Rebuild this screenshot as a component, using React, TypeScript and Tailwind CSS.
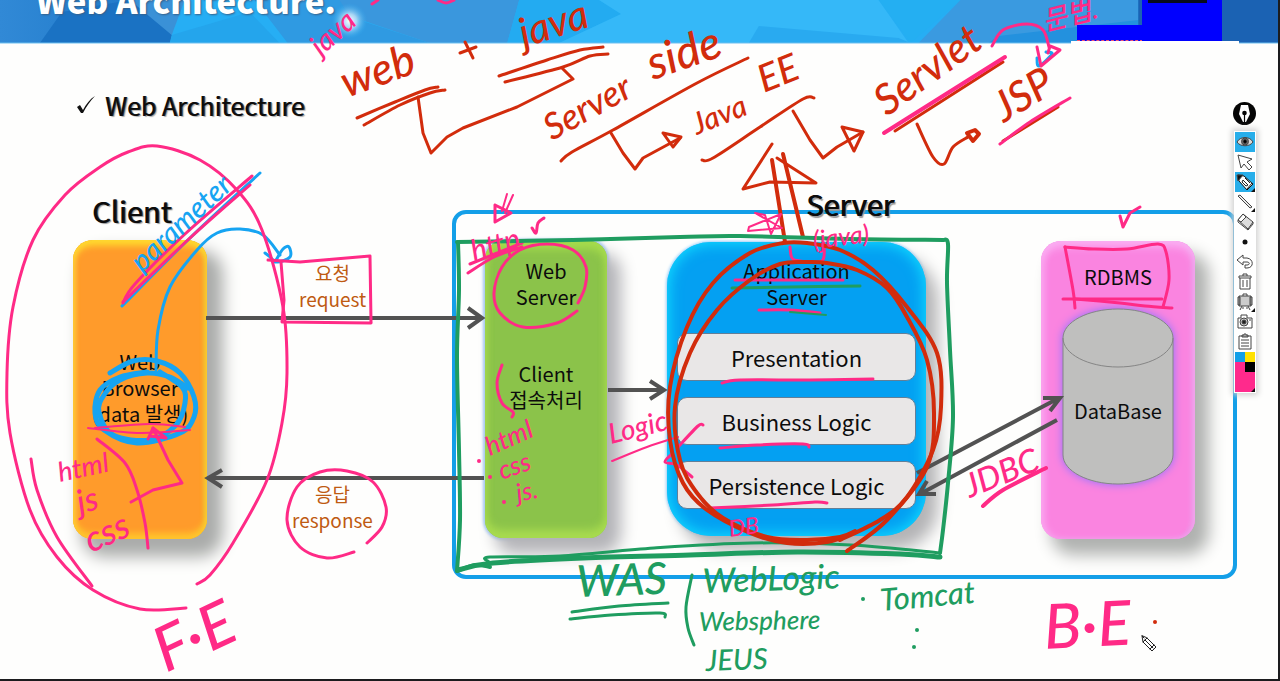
import React from "react";

type Point = [number, number];

const PINK = "#ff2a86";
const RED = "#d22c0c";
const GREEN = "#1f9d60";
const BLUE = "#16a4f2";

interface Stroke {
  color: string;
  width: number;
  points: Point[];
  sharp?: boolean;
}

interface Note {
  text: string;
  x: number;
  y: number;
  size: number;
  angle: number;
  color: string;
}

// Catmull-Rom smoothing, so that a pen line runs through each recorded point.
function toPath(points: Point[], sharp?: boolean): string {
  if (sharp || points.length < 3) {
    return "M" + points.map((p) => p.join(" ")).join(" L");
  }
  let d = `M${points[0][0]} ${points[0][1]}`;
  for (let i = 0; i < points.length - 1; i++) {
    const a = points[i - 1] ?? points[i];
    const b = points[i];
    const c = points[i + 1];
    const e = points[i + 2] ?? c;
    d += ` C${b[0] + (c[0] - a[0]) / 6} ${b[1] + (c[1] - a[1]) / 6} ${c[0] - (e[0] - b[0]) / 6} ${c[1] - (e[1] - b[1]) / 6} ${c[0]} ${c[1]}`;
  }
  return d;
}

const strokes: Stroke[] = [
  // browser rings and request path
  { color: BLUE, width: 3, points: [[156, 370], [158, 330], [170, 287], [197, 250], [217, 233], [240, 229], [263, 235], [280, 255]] },
  { color: BLUE, width: 3, points: [[265, 253], [269, 256], [277, 262], [290, 257], [289, 247], [283, 249], [275, 262]] },
  { color: BLUE, width: 5, points: [[110, 373], [133, 361], [157, 361], [180, 373], [194, 397], [194, 417], [180, 433], [137, 443], [104, 430], [95, 413], [100, 390], [120, 377], [147, 372]] },
  { color: BLUE, width: 5, points: [[188, 388], [170, 377], [147, 373], [120, 380], [104, 395], [99, 412], [113, 435], [150, 440], [176, 425], [185, 403], [182, 387], [160, 372]] },
  { color: BLUE, width: 3, points: [[260, 173], [190, 238], [122, 306]] },
  { color: PINK, width: 3, points: [[252, 176], [185, 234], [135, 284], [123, 303]] },
  { color: PINK, width: 3, points: [[250, 185], [190, 238], [123, 302]] },
  // client ring
  { color: PINK, width: 3, points: [[186, 608], [140, 609], [93, 590], [57, 557], [30, 510], [10, 433], [7, 373], [13, 307], [33, 240], [65, 195], [100, 167], [128, 152], [157, 146], [200, 160], [237, 190], [262, 230], [283, 307], [287, 373], [282, 423], [267, 480], [233, 543], [210, 575], [197, 584]] },
  { color: PINK, width: 3, points: [[31, 459], [37, 490], [57, 537], [92, 586]] },
  { color: PINK, width: 2, points: [[88, 428], [140, 433], [190, 430]] },
  { color: PINK, width: 2, points: [[95, 428], [150, 424], [185, 427]] },
  { color: PINK, width: 3, points: [[97, 439], [125, 463], [137, 490], [145, 523], [148, 548]] },
  { color: PINK, width: 3, points: [[131, 502], [153, 490], [182, 483], [168, 460], [153, 428]], sharp: true },
  { color: PINK, width: 3, points: [[148, 439], [153, 428], [166, 438], [150, 436]], sharp: true },
  // request and response marks
  { color: PINK, width: 3, points: [[268, 260], [300, 262], [370, 256], [371, 322]], sharp: true },
  { color: PINK, width: 3, points: [[281, 262], [284, 300], [282, 322], [371, 323]], sharp: true },
  { color: PINK, width: 3, points: [[354, 552], [327, 558], [300, 547], [287, 520], [297, 487], [320, 472], [347, 471], [373, 482], [386, 507], [382, 527], [367, 543]] },
  // header scraps
  { color: PINK, width: 3, points: [[372, 4], [378, 0]] },
  { color: PINK, width: 3, points: [[438, 0], [446, 3], [454, 0]] },
  // web + java
  { color: RED, width: 3, points: [[357, 118], [395, 102], [425, 90], [438, 87]] },
  { color: RED, width: 3, points: [[364, 125], [400, 105], [430, 93], [445, 90]] },
  { color: RED, width: 3, points: [[460, 53], [476, 47]] },
  { color: RED, width: 3, points: [[465, 42], [473, 58]] },
  { color: RED, width: 3, points: [[499, 76], [547, 60], [580, 50], [603, 47]] },
  { color: RED, width: 3, points: [[505, 82], [563, 67], [590, 56], [608, 54]] },
  { color: RED, width: 3, points: [[418, 97], [423, 133], [431, 153], [447, 137], [463, 128], [517, 107], [573, 79], [562, 68]], sharp: true },
  // server side
  { color: RED, width: 3, points: [[561, 161], [572, 152], [613, 130], [697, 83], [748, 58]] },
  { color: RED, width: 3, points: [[611, 133], [623, 153], [635, 169], [643, 158], [680, 138]], sharp: true },
  { color: RED, width: 3, points: [[663, 133], [681, 137], [673, 147], [663, 133]], sharp: true },
  // java ee
  { color: RED, width: 3, points: [[702, 160], [713, 158], [760, 127], [803, 99], [814, 98]] },
  { color: RED, width: 3, points: [[793, 111], [810, 140], [823, 158], [837, 147], [863, 132]], sharp: true },
  { color: RED, width: 3, points: [[842, 127], [863, 132], [854, 151], [842, 127]], sharp: true },
  // servlet
  { color: RED, width: 3, points: [[895, 131], [1003, 62]] },
  { color: PINK, width: 4, points: [[884, 133], [1005, 57]] },
  { color: RED, width: 3, points: [[917, 124], [933, 157], [944, 164], [953, 147], [968, 137]] },
  { color: RED, width: 4, points: [[967, 133], [975, 130], [979, 134], [973, 141], [967, 133]], sharp: true },
  { color: RED, width: 3, points: [[1003, 141], [1058, 107]] },
  { color: PINK, width: 3, points: [[1000, 144], [1030, 122], [1070, 98]] },
  { color: BLUE, width: 3, points: [[1037, 58], [1039, 66], [1052, 54], [1046, 52]] },
  { color: PINK, width: 3, points: [[992, 46], [1003, 30], [1027, 24], [1043, 30], [1049, 47]] },
  { color: PINK, width: 3, points: [[1037, 47], [1041, 66], [1060, 50], [1050, 46], [1048, 53]], sharp: true },
  // application server double arrow
  { color: RED, width: 3, points: [[772, 144], [743, 189], [770, 182], [816, 183], [777, 158]], sharp: true },
  { color: RED, width: 4, points: [[772, 160], [785, 242]] },
  { color: RED, width: 4, points: [[783, 154], [803, 237]] },
  // stars and ticks
  { color: PINK, width: 2, points: [[755, 213], [782, 228], [748, 231], [749, 227], [781, 214], [771, 234], [765, 215], [755, 213]], sharp: true },
  { color: PINK, width: 3, points: [[495, 205], [511, 213], [495, 222], [495, 205]], sharp: true },
  { color: PINK, width: 2, points: [[507, 194], [502, 211]] },
  { color: PINK, width: 2, points: [[513, 195], [505, 213]] },
  { color: PINK, width: 3, points: [[532, 228], [536, 233], [538, 223], [544, 218]] },
  { color: PINK, width: 3, points: [[1120, 216], [1123, 227], [1130, 213], [1140, 207]], sharp: true },
  { color: PINK, width: 3, points: [[470, 264], [522, 243]] },
  { color: PINK, width: 3, points: [[468, 273], [494, 257], [522, 247]] },
  // web server
  { color: PINK, width: 3, points: [[577, 311], [557, 323], [523, 327], [500, 313], [494, 293], [502, 267], [520, 250], [547, 244], [573, 250], [586, 267], [585, 287], [578, 303]] },
  { color: PINK, width: 3, points: [[502, 365], [497, 383], [502, 403], [513, 412], [512, 417]] },
  { color: PINK, width: 2, points: [[612, 461], [647, 447], [678, 437]] },
  { color: PINK, width: 3, points: [[703, 425], [698, 426], [678, 447]] },
  { color: PINK, width: 3, points: [[692, 477], [677, 465], [665, 462], [672, 454]] },
  // green frame
  { color: GREEN, width: 4, points: [[458, 242], [459, 290], [457, 357], [459, 450], [460, 520], [457, 571]] },
  { color: GREEN, width: 4, points: [[457, 571], [475, 565], [490, 567]] },
  { color: GREEN, width: 4, points: [[457, 242], [573, 240], [680, 237], [740, 236], [850, 239], [943, 240]] },
  { color: GREEN, width: 4, points: [[943, 240], [948, 244], [947, 283], [950, 350], [953, 417], [948, 483], [943, 530], [940, 553]] },
  { color: GREEN, width: 3, points: [[940, 553], [851, 545], [751, 543], [654, 548], [560, 556], [490, 557], [489, 562]] },
  { color: GREEN, width: 5, points: [[458, 570], [493, 563], [583, 558], [690, 555], [797, 552], [900, 554], [940, 557]] },
  // application server marks
  { color: PINK, width: 3, points: [[790, 247], [792, 258], [800, 261], [822, 261], [824, 243]] },
  { color: PINK, width: 3, points: [[735, 280], [843, 280]] },
  { color: GREEN, width: 3, points: [[732, 288], [790, 287], [860, 286]] },
  { color: PINK, width: 3, points: [[759, 310], [790, 310], [820, 313]] },
  { color: GREEN, width: 2, points: [[790, 312], [826, 315]] },
  { color: PINK, width: 3, points: [[722, 383], [740, 380], [810, 380], [873, 379]] },
  { color: PINK, width: 3, points: [[720, 448], [757, 445], [803, 444], [809, 447]] },
  { color: PINK, width: 3, points: [[710, 508], [773, 505], [815, 502], [827, 503]] },
  { color: RED, width: 4, points: [[857, 532], [827, 542], [787, 543], [750, 533], [707, 510], [683, 483], [670, 440], [670, 387], [687, 327], [713, 283], [750, 253], [783, 243], [807, 243], [840, 250], [873, 270], [907, 307], [937, 353], [941, 407], [933, 450], [907, 497], [880, 520], [840, 540]] },
  { color: RED, width: 4, points: [[855, 531], [840, 537], [807, 540], [767, 537], [723, 518], [697, 493], [680, 460], [675, 407], [690, 353], [717, 310], [750, 280], [780, 264], [807, 262], [827, 263], [857, 270], [887, 288], [907, 317], [927, 360], [934, 413], [927, 467], [887, 520], [847, 551]] },
  // database
  { color: PINK, width: 3, points: [[1075, 308], [1073, 290], [1065, 247]] },
  { color: PINK, width: 3, points: [[1065, 247], [1093, 249], [1127, 249], [1158, 244], [1166, 252], [1169, 280], [1163, 307]] },
  { color: PINK, width: 3, points: [[1063, 299], [1162, 299]] },
  { color: PINK, width: 3, points: [[1075, 299], [1120, 303], [1145, 306], [1172, 308]] },
  { color: PINK, width: 4, points: [[983, 506], [1003, 490], [1046, 468]] },
  // product names
  { color: GREEN, width: 3, points: [[572, 612], [619, 606], [668, 603]] },
  { color: GREEN, width: 3, points: [[570, 619], [611, 615], [660, 613], [665, 617]] },
  { color: GREEN, width: 3, points: [[692, 575], [686, 607], [688, 628], [694, 645]] },
];

const dots: [number, number, string][] = [
  [479, 461, PINK], [490, 477, PINK], [504, 502, PINK],
  [863, 599, GREEN], [917, 630, GREEN], [914, 647, GREEN],
  [1155, 622, RED],
];

const notes: Note[] = [
  { text: "java", x: 321, y: 57, size: 29, angle: -42, color: PINK },
  { text: "문법.", x: 1045, y: 31, size: 27, angle: -14, color: PINK },
  { text: "web", x: 347, y: 98, size: 44, angle: -20, color: RED },
  { text: "java", x: 524, y: 48, size: 41, angle: -18, color: RED },
  { text: "Server", x: 552, y: 141, size: 36, angle: -29, color: RED },
  { text: "side", x: 653, y: 80, size: 46, angle: -19, color: RED },
  { text: "Java", x: 697, y: 135, size: 30, angle: -22, color: RED },
  { text: "EE", x: 764, y: 93, size: 38, angle: -22, color: RED },
  { text: "Servlet", x: 887, y: 117, size: 42, angle: -36, color: RED },
  { text: "JSP", x: 1004, y: 123, size: 42, angle: -31, color: RED },
  { text: "parameter", x: 142, y: 273, size: 29, angle: -43, color: BLUE },
  { text: "html", x: 60, y: 482, size: 27, angle: -12, color: PINK },
  { text: "js", x: 80, y: 514, size: 33, angle: -15, color: PINK },
  { text: "css", x: 91, y: 553, size: 36, angle: -24, color: PINK },
  { text: "F·E", x: 166, y: 673, size: 62, angle: -25, color: PINK },
  { text: "http", x: 474, y: 261, size: 29, angle: -16, color: PINK },
  { text: "html", x: 490, y: 456, size: 26, angle: -24, color: PINK },
  { text: "css", x: 502, y: 480, size: 26, angle: -20, color: PINK },
  { text: "js.", x: 518, y: 502, size: 25, angle: -12, color: PINK },
  { text: "Logic", x: 611, y: 444, size: 28, angle: -14, color: PINK },
  { text: "(java)", x: 814, y: 249, size: 25, angle: -7, color: PINK },
  { text: "DB", x: 730, y: 537, size: 23, angle: -8, color: PINK },
  { text: "JDBC", x: 970, y: 498, size: 33, angle: -22, color: PINK },
  { text: "B·E", x: 1045, y: 649, size: 62, angle: -3, color: PINK },
  { text: "WAS", x: 577, y: 597, size: 44, angle: -2, color: GREEN },
  { text: "WebLogic", x: 703, y: 593, size: 34, angle: -2, color: GREEN },
  { text: "Websphere", x: 699, y: 631, size: 26, angle: -1, color: GREEN },
  { text: "JEUS", x: 706, y: 671, size: 29, angle: -2, color: GREEN },
  { text: "Tomcat", x: 881, y: 611, size: 31, angle: -5, color: GREEN },
];

function Header() {
  return (
    <header className="relative h-11 overflow-hidden">
      <svg className="absolute inset-0 h-11 w-full" viewBox="0 0 1280 44" preserveAspectRatio="none" aria-hidden="true">
        <defs>
          <radialGradient id="spark">
            <stop offset="0" stopColor="#fff" />
            <stop offset="0.4" stopColor="#d5effd" stopOpacity="0.7" />
            <stop offset="1" stopColor="#26aef4" stopOpacity="0" />
          </radialGradient>
          <linearGradient id="leftBlue" x1="0" x2="1">
            <stop offset="0" stopColor="#3189d6" />
            <stop offset="1" stopColor="#1b76c6" />
          </linearGradient>
        </defs>
        <path d="M0 0H1280V43H0Z" fill="#26aef4" />
        <path d="M0 0H150L172 35L170 43H0Z" fill="url(#leftBlue)" />
        <path d="M62 12L130 0L172 35L170 43H40Z" fill="#1a72c3" />
        <path d="M130 0H185L172 35Z" fill="#3a91d7" />
        <path d="M172 35L250 12L280 43H170Z" fill="#24a5ec" />
        <path d="M255 0H340L366 22L430 43H288Z" fill="#2f9ae2" />
        <path d="M340 0H520L508 43H430L350 16Z" fill="#3a97dd" />
        <path d="M520 0H600L622 14L560 43H508Z" fill="#23abf1" />
        <path d="M600 0H880L910 43H560L622 14Z" fill="#35b8f8" />
        <path d="M760 26L900 38L912 43H750Z" fill="#29aaf0" />
        <path d="M880 0H962L912 43Z" fill="#24aff2" />
        <path d="M962 0H1140V43H920Z" fill="#3a9ae0" />
        <path d="M1000 36L1140 20V43H990Z" fill="#2391de" />
        <path d="M1140 0H1280V43H1140Z" fill="#1b62b3" />
        <path d="M0 43H1280" stroke="#6cc0f0" />
        <circle cx="350" cy="21" r="18" fill="url(#spark)" />
      </svg>
      <p className="relative -mt-6 pl-9 text-[33px] leading-[48px] font-extrabold whitespace-nowrap text-white [text-shadow:1px_1px_2px_#38618a]">
        Web Architecture.
      </p>
      <div className="absolute top-[25px] left-[1077px] h-4 w-[66px] border-b border-dashed border-[#ee5577] bg-[#0000ff]" />
      <div className="absolute top-0 left-[1142px] h-[41px] w-20 bg-[#0000ff]" />
      <div className="absolute top-0 left-[1148px] h-[3px] w-[59px] bg-[#070b1c]" />
      <div className="absolute top-[41px] left-[1071px] h-[3px] w-[168px] bg-white" />
    </header>
  );
}

function Connectors() {
  return (
    <svg className="pointer-events-none absolute top-0 left-0" width="1280" height="681" fill="none" stroke="#525252" strokeWidth="4" aria-hidden="true">
      <path d="M206 318H481M468 308L482 318L468 328" />
      <path d="M484 478H209M222 470L208 478L222 487" />
      <path d="M608 390H662M650 381L664 390L650 399" />
      <path d="M917 473L1059 398M1043 398H1060L1050 411" />
      <path d="M1057 420L920 494M936 494H919L927 481" />
    </svg>
  );
}

function Diagram() {
  return (
    <section aria-label="Web architecture diagram">
      <div className="absolute top-[210px] left-[452px] h-[369px] w-[785px] rounded-[14px] border-4 border-[#149fe8]" />

      <h2 className="absolute top-[192px] left-[92px] text-[29px] leading-9 [text-shadow:1px_0_0_#222,2px_1px_1px_#999]">Client</h2>
      <h2 className="absolute top-[185px] left-[806px] text-[29px] leading-9 [text-shadow:1px_0_0_#111,2px_2px_1px_#999]">Server</h2>

      <div className="absolute top-[240px] left-[73px] flex h-[299px] w-[134px] flex-col items-center justify-center rounded-[20px] bg-[#ff9b2b] pb-1 text-center text-[20px] leading-[26px] shadow-[12px_14px_16px_4px_#aaacaa,inset_0_6px_6px_#ffd72e,inset_0_-6px_6px_#ffc42c,inset_-3px_0_4px_#e9bd3a,inset_3px_0_4px_#ffb347]">
        <p>Web<br />Browser<br />(data 발생)</p>
      </div>

      <div className="absolute top-[241px] left-[485px] flex h-[297px] w-[122px] flex-col items-center rounded-[18px] bg-[#8bc34a] pt-[17px] text-center text-[20px] leading-[26px] shadow-[12px_14px_16px_2px_#b4b4b8,0_0_3px_2px_#a4c8f4,inset_0_8px_8px_#a6dc4c,inset_0_-8px_8px_#a9dc50]">
        <p>Web<br />Server</p>
        <p className="mt-[51px]">Client<br />접속처리</p>
      </div>

      <div className="absolute top-[242px] left-[667px] flex h-[294px] w-[259px] flex-col items-center rounded-[44px] bg-[#04a0f2] px-2.5 pt-4 text-center shadow-[12px_14px_16px_0px_#b4b4b6,0_0_3px_1px_#9bd0fa,inset_0_0_14px_2px_#10dcff]">
        <p className="text-[20px] leading-[26px]">Application<br />Server</p>
        <ul className="mt-[23px] flex w-full flex-col gap-4 text-[22px] leading-[46px]">
          <li className="h-12 rounded-[10px] border border-[#627f98] bg-[#e9e7e7]">Presentation</li>
          <li className="h-12 rounded-[10px] border border-[#627f98] bg-[#e9e7e7]">Business Logic</li>
          <li className="h-12 rounded-[10px] border border-[#627f98] bg-[#e9e7e7]">Persistence Logic</li>
        </ul>
      </div>

      <div className="absolute top-[241px] left-[1041px] flex h-[298px] w-[154px] flex-col items-center rounded-[20px] bg-[#fa84e0] pt-[22px] text-center text-[20px] leading-7 shadow-[12px_14px_16px_2px_#b0b2b0,inset_0_6px_8px_#fbaef2,inset_4px_0_6px_#fa9cec,inset_-3px_0_4px_#e59ce8]">
        <p>RDBMS</p>
        <div className="relative mt-[18px] flex h-[175px] w-[110px] items-center justify-center pt-7">
          <svg className="absolute top-0 left-0 overflow-visible drop-shadow-[0_0_4px_#8a74ff]" width="110" height="175" aria-hidden="true">
            <path d="M0 29C0 13 25 0 55 0S110 13 110 29V146C110 162 85 175 55 175S0 162 0 146Z" fill="#bfbfbe" stroke="#858585" />
            <path d="M0 29C0 45 25 58 55 58S110 45 110 29" fill="none" stroke="#858585" />
          </svg>
          <span className="relative">DataBase</span>
        </div>
      </div>

      <p className="absolute top-[260px] left-[299px] text-center text-[19px] leading-[26px] text-[#bf5b12]">요청<br />request</p>
      <p className="absolute top-[481px] left-[292px] text-center text-[19px] leading-[26px] text-[#bf5b12]">응답<br />response</p>
      <Connectors />
    </section>
  );
}

function Ink() {
  return (
    <svg className="pointer-events-none absolute top-0 left-0" width="1280" height="681" strokeLinecap="round" strokeLinejoin="round">
      {strokes.map((s, i) => (
        <path key={i} d={toPath(s.points, s.sharp)} fill="none" stroke={s.color} strokeWidth={s.width} />
      ))}
      {dots.map(([x, y, color], i) => (
        <circle key={i} cx={x} cy={y} r="2" fill={color} />
      ))}
      {notes.map((n, i) => (
        <text
          key={i}
          className="font-['Lato','Noto_Sans_CJK_KR',sans-serif] font-medium italic"
          transform={`translate(${n.x} ${n.y}) rotate(${n.angle})`}
          fontSize={n.size}
          fill={n.color}
        >
          {n.text}
        </text>
      ))}
      <g transform="translate(1141 635)" stroke="#222" strokeWidth="1" fill="#fff">
        <path d="M1 1L2 7L11 16L15 12L6 3Z" />
        <path d="M4 5L12 13M6 3L2 7M1 1L3 3" />
        <path d="M9 14L13 10" />
      </g>
    </svg>
  );
}

interface ToolProps {
  label: string;
  active?: boolean;
  corner?: boolean;
  children: React.ReactNode;
}

function Tool({ label, active, corner, children }: ToolProps) {
  return (
    <button type="button" aria-label={label} aria-pressed={active} className={active ? "block h-5 w-5 bg-[#27aeea]" : "block h-5 w-5"}>
      <svg width="20" height="20" viewBox="0 0 20 20" fill="none" stroke="#444" strokeWidth="1">
        {children}
        {corner && <path d="M20 16V20H16Z" fill="#111" stroke="none" />}
      </svg>
    </button>
  );
}

function Toolbar() {
  return (
    <aside aria-label="Pen tools" className="absolute top-[102px] left-[1233px] flex flex-col items-center gap-1.5">
      <button type="button" aria-label="Pen menu" className="block h-[23px] w-[23px]">
        <svg width="23" height="23" viewBox="0 0 23 23">
          <circle cx="11.500" cy="11.500" r="11.500" fill="#050505" />
          <path d="M8 3H15L17 12L13 20H10L6 12Z" fill="#fff" />
          <circle cx="11.500" cy="11" r="2.300" fill="#050505" />
          <path d="M11.500 11V20" stroke="#050505" strokeWidth="1.200" />
        </svg>
      </button>
      <div className="flex flex-col items-center border border-white bg-white shadow-[0_0_6px_2px_#cfcfcf]">
        <Tool label="Show" active>
          <path d="M2 10C5 4 15 4 18 10C15 15 5 15 2 10Z" fill="#d8d8d8" />
          <circle cx="10" cy="9.500" r="3.500" fill="#777" />
          <circle cx="10" cy="9.500" r="2" fill="#000" />
        </Tool>
        <Tool label="Pointer">
          <path d="M3 3L6 16L9 12L14 18L17 15L12 10L17 7Z" fill="#fff" />
        </Tool>
        <Tool label="Pencil" active corner>
          <path d="M3 3L9 4L18 12L12 18L4 9Z" fill="#fff" stroke="#111" />
          <path d="M2 3L8 3L3 9Z" fill="#111" />
          <path d="M8 8L13 13L11 14L7 10ZM10 6L15 11M12 17L17 11" stroke="#222" />
        </Tool>
        <Tool label="Line" corner>
          <path d="M3 4L5 3L17 15L15 16Z" fill="#eee" />
        </Tool>
        <Tool label="Eraser">
          <path d="M3 8L8 2L18 10L13 17Z" fill="#ddd" />
          <path d="M6 10L11 5M3 8V10L13 18V16M18 10V12L13 18" />
          <path d="M3 8L8 2L11 5L6 10Z" fill="#fff" />
        </Tool>
        <Tool label="Pen size">
          <circle cx="10" cy="10" r="2.500" fill="#111" stroke="none" />
        </Tool>
        <Tool label="Undo">
          <path d="M2 8L8 3V6H12C19 7 19 16 12 16H10V13H12C15 13 15 10 12 10H8V13Z" fill="#fff" />
        </Tool>
        <Tool label="Delete">
          <path d="M5 6V17H15V6M4 4H16V6H4ZM8 4V2H12V4M8 8V15M12 8V15" />
        </Tool>
        <Tool label="Board" corner>
          <path d="M4 4H16V14H4Z" fill="#ccc" />
          <path d="M3 5H5V13H3ZM15 5H17V13H15ZM8 4V2H12V4M7 14L5 18M13 14L15 18M8 15V17M12 15V17" />
        </Tool>
        <Tool label="Camera">
          <path d="M3 6H6V3H12V6H17V16H3Z" fill="#fff" />
          <circle cx="9" cy="10" r="4" fill="#ccc" />
          <circle cx="9" cy="10" r="2" fill="#222" />
          <path d="M14 8H16" />
        </Tool>
        <Tool label="Clipboard">
          <path d="M4 4H16V17H4ZM7 5V3H9V2H11V3H13V5ZM6 8H14M6 11H14M6 14H14" />
        </Tool>
        <div className="relative grid h-10 w-5 grid-cols-2 grid-rows-4 bg-[#ff2a8c]">
          <button type="button" aria-label="Blue" className="bg-[#129fe8]" />
          <button type="button" aria-label="Yellow" className="bg-[#ffe100]" />
          <button type="button" aria-label="Pink" />
          <button type="button" aria-label="Black" className="bg-black" />
          <svg className="absolute right-0 bottom-0" width="4" height="4" aria-hidden="true">
            <path d="M4 0V4H0Z" fill="#111" />
          </svg>
        </div>
      </div>
    </aside>
  );
}

export default function App() {
  return (
    <div className="relative flex min-h-screen flex-col overflow-hidden border-r-2 border-b-2 border-[#1c1c1e] bg-[#fefefd] font-['Noto_Sans_CJK_KR','Noto_Sans',sans-serif] text-[#0c0c0c]">
      <Header />
      <main className="flex-1">
        <h1 className="flex items-center gap-2.5 pt-[43px] pl-[77px] text-[25px] leading-9 [text-shadow:1px_0_0_#333,2px_1px_1px_#aaa]">
          <svg width="18" height="18" viewBox="0 0 18 18" aria-hidden="true">
            <path d="M0 11L3 9L6 14C9 8 13 3 18 0C13 5 9 11 6 17H4Z" fill="#111" />
          </svg>
          Web Architecture
        </h1>
        <Diagram />
      </main>
      <Ink />
      <Toolbar />
    </div>
  );
}
